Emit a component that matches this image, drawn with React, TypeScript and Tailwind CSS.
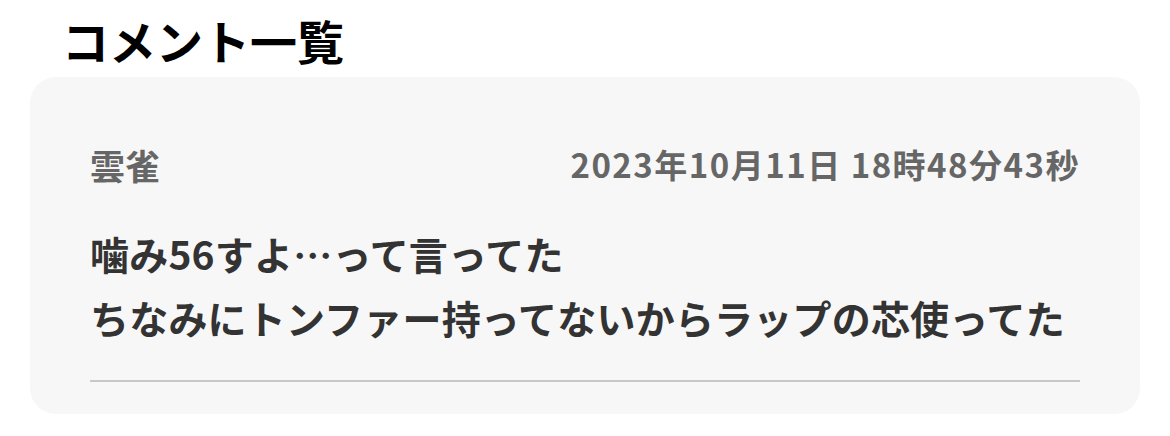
import React from 'react';

const comments = [
  {
    name: '雲雀',
    date: '2023年10月11日 18時48分43秒',
    lines: ['噛み56すよ…って言ってた', 'ちなみにトンファー持ってないからラップの芯使ってた'],
  },
];

const font = { fontFamily: '"Noto Sans CJK JP", "Noto Sans", sans-serif' };

export default function App() {
  return (
    <div className="w-[1170px] h-[436px] bg-white overflow-hidden" style={font}>
      <h1 className="pl-[62px] pt-[16px] text-[47px] leading-none font-bold text-black">コメント一覧</h1>
      <div className="mt-[14px] mx-[30px] flex flex-col gap-4">
        {comments.map((c, i) => (
          <div key={i} className="bg-[#f7f7f7] rounded-[26px] px-[60px] pt-[70px] pb-[32px]">
            <div className="flex items-center justify-between">
              <span className="text-[35px] leading-none font-bold text-[#666666]">{c.name}</span>
              <span className="text-[33px] leading-none font-bold tracking-[1.5px] text-[#666666]">{c.date}</span>
            </div>
            <div className="mt-[39px] text-[39px] leading-[64px] tracking-[0.2px] font-bold text-[#333333]">
              {c.lines.map((l, j) => (
                <p key={j}>{l}</p>
              ))}
            </div>
            <div className="mt-[31px] h-[2px] bg-[#c8c8c8]" />
          </div>
        ))}
      </div>
    </div>
  );
}
